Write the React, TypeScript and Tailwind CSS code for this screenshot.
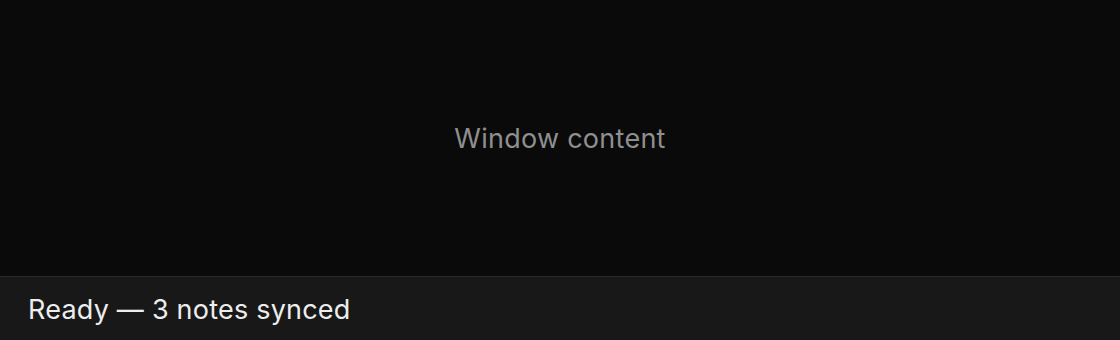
import React from 'react';

const App: React.FC = () => {
  return (
    <div className="flex h-[340px] w-full flex-col bg-[#0a0a0a]" style={{ fontFamily: 'Inter, "Noto Sans", sans-serif' }}>
      <main className="flex flex-1 items-center justify-center pt-[2px]">
        <span className="text-[27px] tracking-[0.01em] text-[#8f8f8f]">Window content</span>
      </main>
      <footer className="flex h-[64px] items-center border-t border-[#2a2a2a] bg-[#181818] px-[28px] pt-[3px]">
        <span className="text-[27px] tracking-[0.008em] text-[#ededed]">Ready — 3 notes synced</span>
      </footer>
    </div>
  );
};

export default App;
